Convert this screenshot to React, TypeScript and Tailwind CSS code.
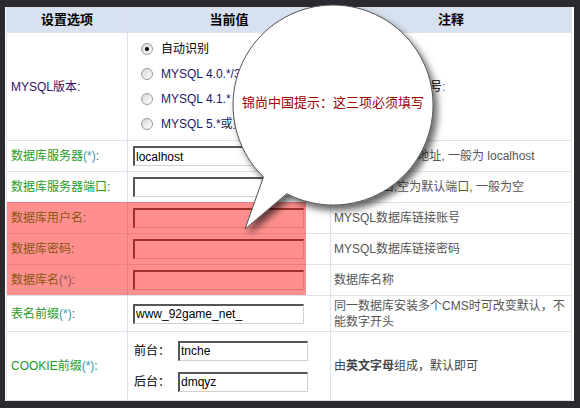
import React from "react";

const INPUT =
  "h-[20px] w-[171px] border-t-2 border-l-2 border-r border-b border-t-[#555] border-l-[#555] border-r-[#d0d0d0] border-b-[#d0d0d0] bg-white px-[1px] text-[12px] leading-[16px] text-black outline-none font-[Liberation_Sans,sans-serif]";

const SMALL_INPUT =
  "h-[20px] w-[130px] border-t-2 border-l-2 border-r border-b border-t-[#555] border-l-[#555] border-r-[#d0d0d0] border-b-[#d0d0d0] bg-white px-[1px] text-[12px] leading-[16px] text-black outline-none font-[Liberation_Sans,sans-serif]";

function Radio({ checked }: { checked?: boolean }) {
  return (
    <span className="flex h-[12px] w-[12px] items-center justify-center rounded-full border border-[#9a9a9a] bg-gradient-to-br from-[#d6d6d6] to-white">
      {checked && <span className="h-[4px] w-[4px] rounded-full bg-black" />}
    </span>
  );
}

// green label with blue (*) mark
function Label({ text, star }: { text: string; star?: boolean }) {
  return (
    <span className="text-[#1d9b1d]">
      {text}
      {star && <span className="text-[#3399aa]">(*)</span>}
      <span className="text-[#226655]">:</span>
    </span>
  );
}

const c1 = "flex items-center bg-white pl-[4px] text-[12px]";
const c2 = "flex items-center bg-white pl-[5px]";
const c3 = "flex items-center bg-white pl-[3px] text-[12px] text-[#555]";

export default function App() {
  return (
    <div className="relative h-[408px] w-[580px] overflow-hidden bg-[#2b2a30] pt-[7px] pb-[7px] pl-[5px] pr-[6px] font-[Liberation_Sans,Noto_Sans_CJK_SC,sans-serif]">
      <div className="bg-white pl-px pr-[2px]">
        <div className="grid grid-cols-[120px_202px_240px] grid-rows-[24px_107px_30px_30px_30px_30px_30px_35px_68px] gap-px bg-[#dbe2ed] p-px">
          {/* header */}
          <div className="flex items-center justify-center bg-[#d7e1ef] text-[13px] font-bold text-black">设置选项</div>
          <div className="flex items-center justify-center bg-[#d7e1ef] text-[13px] font-bold text-black">当前值</div>
          <div className="flex items-center justify-center bg-[#d7e1ef] text-[13px] font-bold text-black">注释</div>

          {/* mysql version */}
          <div className={c1}>
            <span className="text-[#331166]">MYSQL版本:</span>
          </div>
          <div className="flex flex-col justify-center bg-white pl-[13px] text-[12px] text-[#1a1a66]">
            <div className="flex h-[25px] items-center gap-[8px] text-black">
              <Radio checked />
              自动识别
            </div>
            <div className="flex h-[25px] items-center gap-[8px]">
              <Radio />
              MYSQL 4.0.*/3.*
            </div>
            <div className="flex h-[25px] items-center gap-[8px]">
              <Radio />
              MYSQL 4.1.*
            </div>
            <div className="flex h-[25px] items-center gap-[8px]">
              <Radio />
              MYSQL 5.*或更高
            </div>
          </div>
          <div className={c3}>
            <span className="text-black">
              选择数据库的版本号<span className="text-[#3366cc]">:</span>
            </span>
          </div>

          {/* server */}
          <div className={c1}>
            <Label text="数据库服务器" star />
          </div>
          <div className={c2}>
            <input className={INPUT} defaultValue="localhost" />
          </div>
          <div className={c3}>数据库服务器IP地址, 一般为 localhost</div>

          {/* port */}
          <div className={c1}>
            <Label text="数据库服务器端口" />
          </div>
          <div className={c2}>
            <input className={INPUT} defaultValue="" />
          </div>
          <div className={c3}>数据库端口,空为默认端口, 一般为空</div>

          {/* user */}
          <div className={c1}>
            <Label text="数据库用户名" />
          </div>
          <div className={c2}>
            <input className={INPUT} defaultValue="" />
          </div>
          <div className={c3}>MYSQL数据库链接账号</div>

          {/* password */}
          <div className={c1}>
            <Label text="数据库密码" />
          </div>
          <div className={c2}>
            <input className={INPUT} defaultValue="" />
          </div>
          <div className={c3}>MYSQL数据库链接密码</div>

          {/* db name */}
          <div className={c1}>
            <Label text="数据库名" star />
          </div>
          <div className={c2}>
            <input className={INPUT} defaultValue="" />
          </div>
          <div className={c3}>数据库名称</div>

          {/* table prefix */}
          <div className={c1}>
            <Label text="表名前缀" star />
          </div>
          <div className={c2}>
            <input className={INPUT} defaultValue="www_92game_net_" />
          </div>
          <div className="flex flex-col justify-center bg-white pl-[3px] text-[12px] leading-[16px] text-[#555]">
            <span className="whitespace-nowrap">同一数据库安装多个CMS时可改变默认，不</span>
            <span className="whitespace-nowrap">能数字开头</span>
          </div>

          {/* cookie */}
          <div className={c1}>
            <Label text="COOKIE前缀" star />
          </div>
          <div className="flex flex-col justify-center gap-[11px] bg-white pl-[6px] text-[12px] text-black">
            <div className="flex items-center gap-[8px]">
              <span className="w-[36px]">前台：</span>
              <input className={SMALL_INPUT} defaultValue="tnche" />
            </div>
            <div className="flex items-center gap-[8px]">
              <span className="w-[36px]">后台：</span>
              <input className={SMALL_INPUT} defaultValue="dmqyz" />
            </div>
          </div>
          <div className={c3}>
            <span className="text-[#444]">
              由<span className="font-bold">英文字母</span>组成，默认即可
            </span>
          </div>
        </div>
      </div>

      {/* red highlight over the three required rows */}
      <div className="pointer-events-none absolute left-[7px] top-[202px] h-[93px] w-[299px] bg-[rgba(255,0,0,0.44)]" />

      {/* speech bubble */}
      <svg className="pointer-events-none absolute left-0 top-0" width="580" height="408" viewBox="0 0 580 408">
        <defs>
          <filter id="bubbleShadow" x="-20%" y="-20%" width="140%" height="140%">
            <feDropShadow dx="4" dy="5" stdDeviation="3.5" floodColor="#000" floodOpacity="0.6" />
          </filter>
        </defs>
        <path
          d="M 286.8 193.7 L 245 229 L 263.5 176.9 A 100 100 0 1 1 286.8 193.7 Z"
          fill="#fff"
          stroke="#555"
          strokeWidth="1"
          filter="url(#bubbleShadow)"
        />
      </svg>
      <div className="pointer-events-none absolute left-[242px] top-[95px] whitespace-nowrap text-[13px] leading-[16px] text-[#990000]">
        锦尚中国提示：这三项必须填写
      </div>
    </div>
  );
}
